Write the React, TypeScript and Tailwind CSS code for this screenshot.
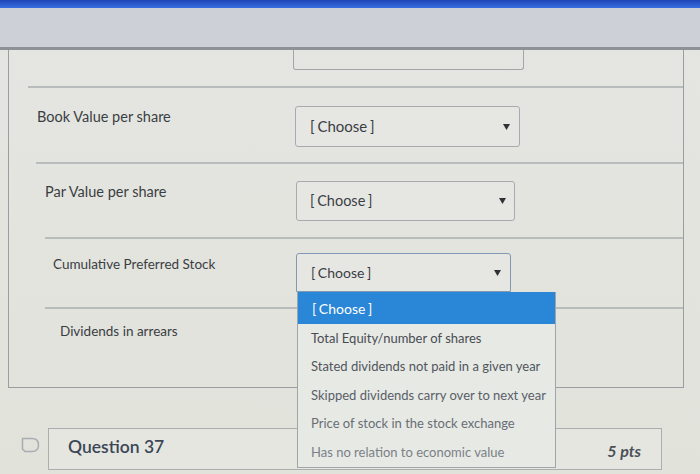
import { FC } from 'react';

const options = [
  { label: 'Total Equity/number of shares', color: 'text-[#474c52]' },
  { label: 'Stated dividends not paid in a given year', color: 'text-[#50565c]' },
  { label: 'Skipped dividends carry over to next year', color: 'text-[#596067]' },
  { label: 'Price of stock in the stock exchange', color: 'text-[#686e74]' },
  { label: 'Has no relation to economic value', color: 'text-[#7b8086]' },
];

const Arrow: FC = () => (
  <svg width="7" height="6" viewBox="0 0 7 6" className="shrink-0">
    <path d="M0 0 H7 L3.5 6 Z" fill="#2f3236" />
  </svg>
);

const Divider: FC<{ indent: string }> = ({ indent }) => (
  <div className={`h-[2px] bg-[#b9bcbd] ${indent}`} />
);

export default function App() {
  return (
    <div
      className="w-[700px] h-[474px] overflow-hidden bg-gradient-to-b from-[#e5e6e2] to-[#e1e2da] text-[#3a3e43]"
      style={{ fontFamily: 'Lato, "Open Sans", sans-serif' }}
    >
      {/* browser chrome */}
      <div className="h-[8px] bg-gradient-to-b from-[#1f46b8] to-[#3a6ee0]" />
      <div className="h-[42px] bg-[#cdd1d7] border-b-[3px] border-[#8e9297]" />

      {/* matching question panel */}
      <div className="ml-[8px] mr-[16px] h-[338px] border-l border-r border-b border-[#9a9ea2] flex flex-col">
        {/* bottom of previous select */}
        <div className="ml-[284px] w-[231px] h-[20px] border border-t-0 border-[#a2a6aa] rounded-b-[3px]" />
        <div className="mt-[16px]">
          <Divider indent="ml-[19px]" />
        </div>

        {/* row 1 */}
        <div className="h-[74px] flex items-start">
          <div className="w-[286px] shrink-0 pl-[28px] mt-[19px] text-[14.5px] leading-[20px]">
            Book Value per share
          </div>
          <div className="mt-[18px] w-[225px] h-[41px] border border-[#a7abaf] rounded-[3px] bg-[#e6e7e3] flex items-center pl-[14px] pr-[9px] justify-between">
            <span className="text-[15px] [word-spacing:-1px]">[ Choose ]</span>
            <Arrow />
          </div>
        </div>
        <Divider indent="ml-[27px]" />

        {/* row 2 */}
        <div className="h-[73px] flex items-start">
          <div className="w-[287px] shrink-0 pl-[36px] mt-[18px] text-[14.5px] leading-[20px]">
            Par Value per share
          </div>
          <div className="mt-[17px] w-[219px] h-[40px] border border-[#a7abaf] rounded-[3px] bg-[#e6e7e3] flex items-center pl-[13px] pr-[8px] justify-between">
            <span className="text-[14.5px] [word-spacing:-1px]">[ Choose ]</span>
            <Arrow />
          </div>
        </div>
        <Divider indent="ml-[36px]" />

        {/* row 3 with open menu */}
        <div className="h-[68px] flex items-start">
          <div className="w-[287px] shrink-0 pl-[44px] mt-[16px] text-[13.5px] leading-[18px]">
            Cumulative Preferred Stock
          </div>
          <div className="relative z-10 mt-[14px]">
            <div className="w-[215px] h-[39px] border border-[#8299b4] rounded-t-[3px] bg-[#e6e7e3] flex items-center pl-[14px] pr-[9px] justify-between">
              <span className="text-[14px] [word-spacing:-1px]">[ Choose ]</span>
              <Arrow />
            </div>
            <div className="absolute left-[1px] top-[39px] w-[259px] bg-[#e7e9e5] border-l border-r border-b border-[#a0a5aa]">
              <div className="h-[32px] bg-[#2a86d6] text-white text-[14px] [word-spacing:-1px] flex items-center pl-[14px]">
                [ Choose ]
              </div>
              {options.map((o) => (
                <div
                  key={o.label}
                  className={`h-[28.5px] flex items-center pl-[13px] text-[13px] whitespace-nowrap ${o.color}`}
                >
                  {o.label}
                </div>
              ))}
            </div>
          </div>
        </div>
        <Divider indent="ml-[36px]" />

        {/* row 4 */}
        <div className="flex-1 flex items-start">
          <div className="pl-[51px] mt-[13px] text-[13.5px] leading-[18px]">
            Dividends in arrears
          </div>
        </div>
      </div>

      {/* next question header */}
      <div className="flex items-start mt-[40px]">
        <div className="w-[48px] shrink-0 flex justify-end pr-[8px] pt-[9px]">
          <svg width="19" height="16" viewBox="0 0 19 16">
            <path
              d="M1.5 1.5 H11 Q17.5 1.5 17.5 8 Q17.5 14.5 11 14.5 H4 L1.5 12 Z"
              fill="none"
              stroke="#a9adb1"
              strokeWidth="1.5"
            />
          </svg>
        </div>
        <div className="w-[614px] h-[42px] border border-[#aaaeb1] bg-[#e5e6e0] flex items-start justify-between pl-[19px] pr-[20px]">
          <span className="mt-[5px] text-[17.5px] font-semibold text-[#3a4656]">Question 37</span>
          <span className="mt-[10px] text-[16px] font-bold italic text-[#4b5058]">5 pts</span>
        </div>
      </div>
    </div>
  );
}
